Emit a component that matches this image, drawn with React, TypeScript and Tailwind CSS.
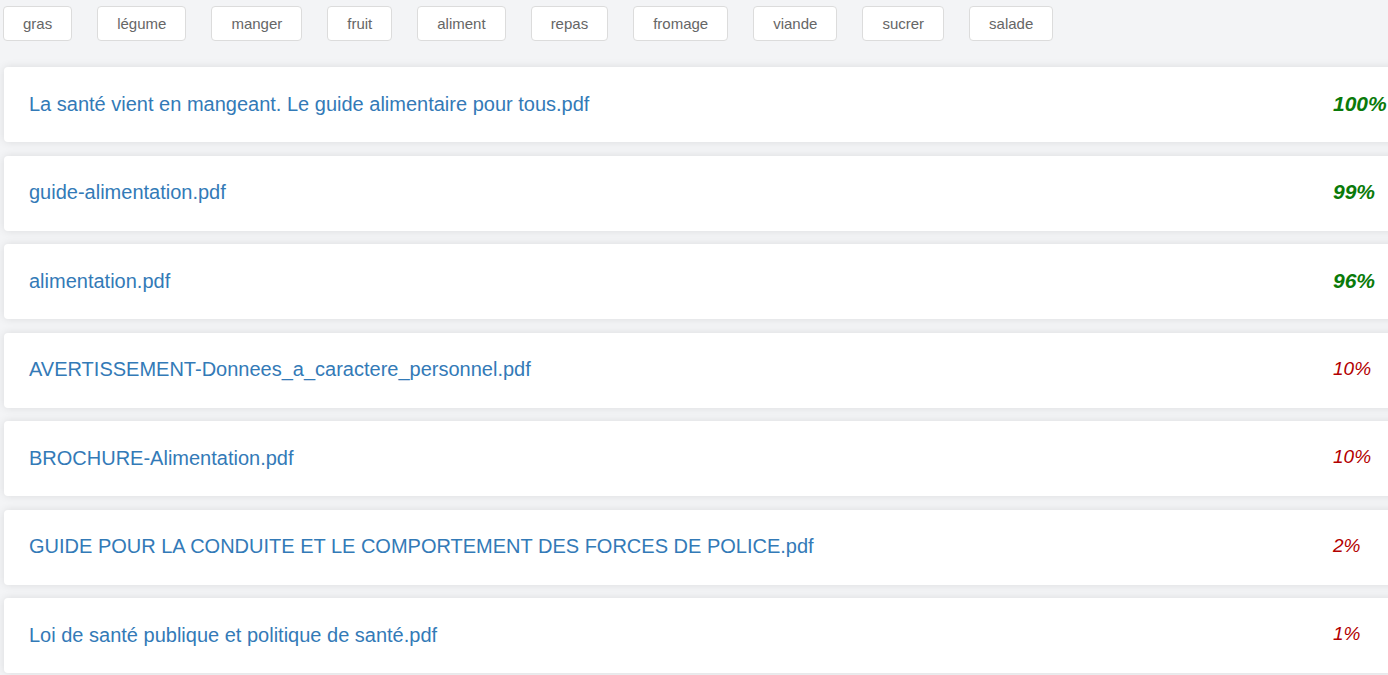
import React from "react";

const tags = ["gras", "légume", "manger", "fruit", "aliment", "repas", "fromage", "viande", "sucrer", "salade"];

const docs: { title: string; pct: string; high: boolean }[] = [
  { title: "La santé vient en mangeant. Le guide alimentaire pour tous.pdf", pct: "100%", high: true },
  { title: "guide-alimentation.pdf", pct: "99%", high: true },
  { title: "alimentation.pdf", pct: "96%", high: true },
  { title: "AVERTISSEMENT-Donnees_a_caractere_personnel.pdf", pct: "10%", high: false },
  { title: "BROCHURE-Alimentation.pdf", pct: "10%", high: false },
  { title: "GUIDE POUR LA CONDUITE ET LE COMPORTEMENT DES FORCES DE POLICE.pdf", pct: "2%", high: false },
  { title: "Loi de santé publique et politique de santé.pdf", pct: "1%", high: false },
];

export default function App() {
  return (
    <div
      className="w-full h-[675px] overflow-hidden bg-[#f3f4f6]"
      style={{ fontFamily: '"Liberation Sans", Arial, sans-serif' }}
    >
      <div className="flex gap-[25px] pt-[6px] pl-[3px]">
        {tags.map((t) => (
          <button
            key={t}
            className="h-[35px] px-[19px] bg-white border border-[#dcdcdc] rounded-[4px] text-[15px] text-[#666666] leading-none"
          >
            {t}
          </button>
        ))}
      </div>
      <div className="flex flex-col gap-[13.5px] pt-[26px] pl-[4px]">
        {docs.map((d) => (
          <div
            key={d.title}
            className="w-[1420px] h-[75px] shrink-0 flex items-center bg-white rounded-[4px] pl-[25px] pb-[2px] shadow-[0_0_8px_rgba(0,0,0,0.10)]"
          >
            <div className="flex-1 text-[20px] text-[#337ab7]">{d.title}</div>
            <div
              className={
                d.high
                  ? "w-[91px] text-[21px] font-bold italic text-[#0a7a0a]"
                  : "w-[91px] text-[19px] italic text-[#b30000]"
              }
            >
              {d.pct}
            </div>
          </div>
        ))}
      </div>
    </div>
  );
}
